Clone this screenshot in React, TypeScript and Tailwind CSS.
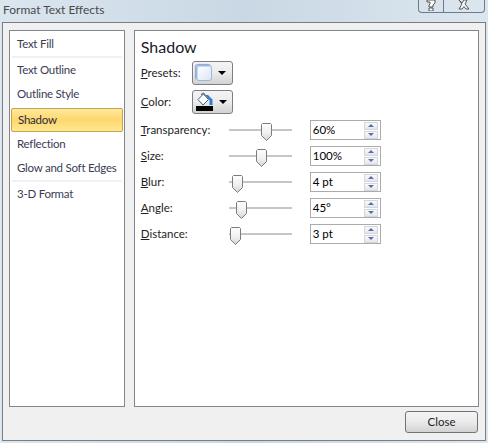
const font = "font-['Lato',sans-serif]";

const categories = [
  { label: "Text Fill", divider: true },
  { label: "Text Outline" },
  { label: "Outline Style" },
  { label: "Shadow", selected: true },
  { label: "Reflection" },
  { label: "Glow and Soft Edges", divider: true },
  { label: "3-D Format" },
];

const sliders = [
  { label: "Transparency:", u: "T", rest: "ransparency:", value: "60%", pos: 37 },
  { label: "Size:", u: "S", rest: "ize:", value: "100%", pos: 32 },
  { label: "Blur:", u: "B", rest: "lur:", value: "4 pt", pos: 8 },
  { label: "Angle:", u: "A", rest: "ngle:", value: "45°", pos: 12 },
  { label: "Distance:", u: "D", rest: "istance:", value: "3 pt", pos: 6 },
];

function Caret() {
  return <span className="w-0 h-0 border-x-[4px] border-x-transparent border-t-[4px] border-t-black" />;
}

function PickerButton({ children }: { children: React.ReactNode }) {
  return (
    <button className="w-[41px] h-[24px] flex items-center pl-[3px] gap-[6px] rounded-[3px] border border-[#7c7f84] bg-gradient-to-b from-[#f4f4f4] via-[#ebebeb] to-[#d2d2d2]">
      {children}
      <Caret />
    </button>
  );
}

function Thumb() {
  return (
    <svg width="11" height="18" viewBox="0 0 11 18" className="block">
      <defs>
        <linearGradient id="thumb" x1="0" y1="0" x2="0" y2="1">
          <stop offset="0" stopColor="#fdfdfd" />
          <stop offset="0.55" stopColor="#f0f0f0" />
          <stop offset="1" stopColor="#d4d4d4" />
        </linearGradient>
      </defs>
      <path d="M1.5.5h8l1 1v11l-5 5-5-5v-11z" fill="url(#thumb)" stroke="#7c7c7c" />
    </svg>
  );
}

function Spinner() {
  return (
    <div className="w-[14px] flex flex-col gap-px">
      <div className="h-[8px] flex items-center justify-center border border-[#d3d6dc] bg-gradient-to-b from-[#fafafa] to-[#e4e6ea]">
        <span className="w-0 h-0 border-x-[3px] border-x-transparent border-b-[3px] border-b-[#5b6fa8]" />
      </div>
      <div className="h-[8px] flex items-center justify-center border border-[#d3d6dc] bg-gradient-to-b from-[#fafafa] to-[#e4e6ea]">
        <span className="w-0 h-0 border-x-[3px] border-x-transparent border-t-[3px] border-t-[#5b6fa8]" />
      </div>
    </div>
  );
}

function SliderRow({ u, rest, value, pos }: (typeof sliders)[number]) {
  return (
    <div className="h-[26px] flex items-center">
      <div className="w-[88px] text-[#1e1e1e]">
        <span className="underline">{u}</span>
        {rest}
      </div>
      <div className="w-[63px] h-[2px] bg-[#c3c7c7] relative">
        <div className="absolute top-[-6px]" style={{ left: pos - 5 }}>
          <Thumb />
        </div>
      </div>
      <div className="ml-[18px] w-[71px] h-[20px] border border-[#ababab] bg-white flex items-center justify-between pl-[2px] pr-[2px] text-black">
        <span>{value}</span>
        <Spinner />
      </div>
    </div>
  );
}

export default function App() {
  return (
    <div className={`${font} w-[488px] h-[443px] overflow-hidden flex flex-col text-[11.5px] bg-gradient-to-r from-[#dbe6ef] via-[#c9d8e4] to-[#dce6ef]`}>
      <div className="h-[22px] shrink-0 flex justify-between items-start">
        <div className="pl-[3px] pt-[1px] text-[12px] text-[#4a4a4a]">Format Text Effects</div>
        <div className="mr-[3px] h-[13px] w-[67px] flex rounded-b-[4px] border border-t-0 border-[#6d7a88]">
          <div className="w-[25px] border-r border-[#6d7a88] flex justify-center">
            <svg width="10" height="11" viewBox="0 0 10 11" className="block">
              <path d="M1 0v2h3v2L3 5v2h4V5l2-2V0zM3 8h4v3H3z" fill="#fff" stroke="#555" />
            </svg>
          </div>
          <div className="flex-1 flex justify-center">
            <svg width="14" height="10" viewBox="0 0 14 10" className="block">
              <path d="M2 0l3 3 2-3h3L8 4l4 5H9L7 6.500 5 9H2l3-5z" fill="#fff" stroke="#555" />
            </svg>
          </div>
        </div>
      </div>

      <div className="mx-[2px] h-[419px] border border-[#7b7d85] bg-[#f0f0f0] pt-[7px] px-[6px] flex flex-col">
        <div className="flex gap-[9px] h-[377px]">
          <div className="w-[116px] border border-[#83858c] bg-white px-[1px] flex flex-col tracking-[-0.25px]">
            {categories.map((c) => (
              <div key={c.label}>
                <div
                  className={
                    c.selected
                      ? "h-[24px] mt-[2px] flex items-center pl-[6px] rounded-[2px] border border-[#c9a24c] bg-gradient-to-b from-[#fde99f] via-[#fdd76c] to-[#fee892] text-[#2a2a40]"
                      : `h-[24px] flex items-center pl-[6px] whitespace-nowrap text-[#3b3b55] ${c.label === "Text Fill" ? "mt-[1px]" : ""}`
                  }
                >
                  {c.label}
                </div>
                {c.divider && <div className="h-[2px] mx-[1px] bg-[#f0f0f6]" />}
              </div>
            ))}
          </div>

          <div className="w-[346px] border border-[#83858c] bg-white pl-[6px] flex flex-col">
            <div className="text-[16px] leading-[20px] mt-[6px] text-[#1a1a2a]">Shadow</div>
            <div className="h-[29px] mt-[1px] flex items-center">
              <div className="w-[51px] text-[#1e1e1e]"><span className="underline">P</span>resets:</div>
              <PickerButton>
                <span className="w-[16px] h-[16px] rounded-[3px] border border-[#9db6dc] bg-gradient-to-br from-white to-[#dbe6f6] shadow-[inset_1px_1px_0_#c7d8f0,-1px_-1px_1px_#8aa6d2]" />
              </PickerButton>
            </div>
            <div className="h-[29px] flex items-center mb-[1px]">
              <div className="w-[51px] text-[#1e1e1e]"><span className="underline">C</span>olor:</div>
              <PickerButton>
                <svg width="17" height="19" viewBox="0 0 17 19" className="block shrink-0">
                  <path d="M9 3h3l4.500 4.500V13h-3V8z" fill="#2f7fd0" />
                  <path d="M2 7.500L7.500 2l5 5.500-5.500 5.500z" fill="#fff" stroke="#3a5a86" />
                  <path d="M5.500 3C5.500 .5 9 .5 9 3.500" fill="none" stroke="#444" />
                  <rect x="0" y="14" width="17" height="5" fill="#000" />
                </svg>
              </PickerButton>
            </div>
            <div className="flex flex-col">
              {sliders.map((s) => (
                <SliderRow key={s.label} {...s} />
              ))}
            </div>
          </div>
        </div>

        <div className="flex justify-end pr-[1px] pt-[4px]">
          <button className="w-[73px] h-[22px] rounded-[3px] border border-[#70747a] bg-gradient-to-b from-[#f4f4f4] via-[#ebebeb] to-[#d2d2d2] text-[#1e1e1e]">
            Close
          </button>
        </div>
      </div>
    </div>
  );
}
